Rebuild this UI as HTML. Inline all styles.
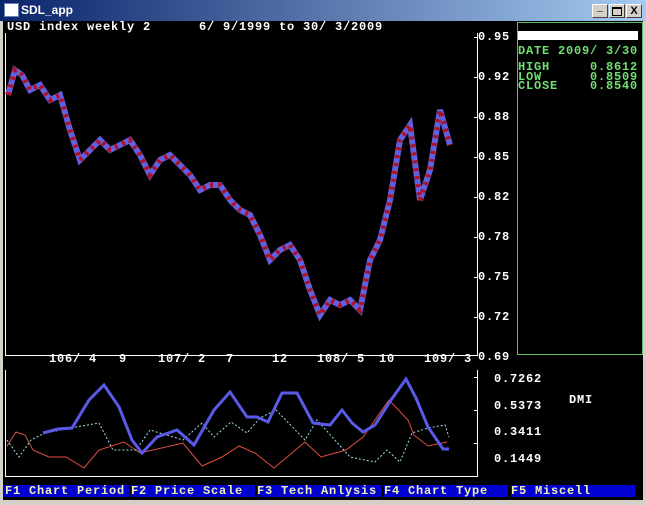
<!DOCTYPE html>
<html><head><style>
body{margin:0;width:646px;height:505px;overflow:hidden;background:#d4d0c8;font-family:"Liberation Mono",monospace;}
.t{position:absolute;white-space:pre;font-size:12px;font-weight:bold;letter-spacing:0.8px;}
.m{position:absolute;top:485px;height:12px;width:124px;background:#0000d0;color:#f0f0b0;white-space:pre;font-size:12px;font-weight:bold;letter-spacing:0.8px;line-height:12px;font-family:"Liberation Mono",monospace;}
</style></head><body>
<div style="position:absolute;left:0;top:0;width:646px;height:21px;background:linear-gradient(90deg,#0a246a,#a6caf0);"></div>
<div style="position:absolute;left:4px;top:3px;width:13px;height:12px;background:#fff;border:1px solid #7080b0"></div>
<div style="position:absolute;left:21px;top:3px;color:#fff;font-family:'Liberation Sans',sans-serif;font-size:12px;font-weight:bold;">SDL_app</div>
<div style="position:absolute;left:592px;top:4px;width:14px;height:12px;background:#d4d0c8;border:1px solid #fff;border-right-color:#404040;border-bottom-color:#404040;font-size:10px;text-align:center;line-height:10px">_</div>
<div style="position:absolute;left:609px;top:4px;width:14px;height:12px;background:#d4d0c8;border:1px solid #fff;border-right-color:#404040;border-bottom-color:#404040;"><div style="margin:2px;width:8px;height:6px;border:1px solid #000;border-top-width:2px"></div></div>
<div style="position:absolute;left:626px;top:4px;width:14px;height:12px;background:#d4d0c8;border:1px solid #fff;border-right-color:#404040;border-bottom-color:#404040;font-size:11px;font-weight:bold;text-align:center;line-height:12px;font-family:'Liberation Sans',sans-serif">X</div>
<div style="position:absolute;left:3px;top:21px;width:640px;height:479px;background:#000;"></div>
<div class="t" style="left:7px;top:20px;color:#fff">USD index weekly 2      6/ 9/1999 to 30/ 3/2009</div>
<div style="position:absolute;left:517px;top:22px;width:124px;height:331px;border:1px solid #60c060;"></div>
<div style="position:absolute;left:518px;top:31px;width:120px;height:9px;background:#fff"></div>
<div class="t" style="left:518px;top:44px;color:#70e070">DATE 2009/ 3/30</div>
<div class="t" style="left:518px;top:63px;color:#70e070;line-height:9.5px">HIGH     0.8612
LOW      0.8509
CLOSE    0.8540</div>
<svg style="position:absolute;left:0;top:0" width="646" height="505">
<g stroke="#fff" stroke-width="1" fill="none">
<line x1="5.5" y1="33" x2="5.5" y2="355"/><line x1="5" y1="355.5" x2="478" y2="355.5"/><line x1="477.5" y1="33" x2="477.5" y2="356"/>
<line x1="5.5" y1="370" x2="5.5" y2="477"/><line x1="5" y1="476.5" x2="478" y2="476.5"/><line x1="477.5" y1="370" x2="477.5" y2="477"/>
<line x1="474" y1="37.5" x2="478" y2="37.5"/><line x1="474" y1="77.5" x2="478" y2="77.5"/><line x1="474" y1="117.5" x2="478" y2="117.5"/><line x1="474" y1="157.5" x2="478" y2="157.5"/><line x1="474" y1="197.5" x2="478" y2="197.5"/><line x1="474" y1="237.5" x2="478" y2="237.5"/><line x1="474" y1="277.5" x2="478" y2="277.5"/><line x1="474" y1="317.5" x2="478" y2="317.5"/>
<line x1="474" y1="377.5" x2="478" y2="377.5"/><line x1="474" y1="410.5" x2="478" y2="410.5"/><line x1="474" y1="443.5" x2="478" y2="443.5"/>
</g>
<polyline fill="none" stroke="#6060e0" stroke-width="6" points="8,95 15,70 22,75 30,90 40,85 50,100 60,95 70,130 80,160 90,150 100,140 110,150 120,145 130,140 140,155 150,175 160,160 170,155 180,165 190,175 200,190 210,185 220,185 230,200 240,210 250,215 260,235 270,260 280,250 290,245 300,260 310,290 320,315 330,300 340,305 350,300 360,310 370,260 380,240 390,200 400,140 410,125 420,200 430,170 440,110 450,145"/>
<polyline fill="none" stroke="#b01020" stroke-width="5" stroke-dasharray="3 5" points="8,95 15,70 22,75 30,90 40,85 50,100 60,95 70,130 80,160 90,150 100,140 110,150 120,145 130,140 140,155 150,175 160,160 170,155 180,165 190,175 200,190 210,185 220,185 230,200 240,210 250,215 260,235 270,260 280,250 290,245 300,260 310,290 320,315 330,300 340,305 350,300 360,310 370,260 380,240 390,200 400,140 410,125 420,200 430,170 440,110 450,145"/>
<polyline fill="none" stroke="#e05040" stroke-width="1" points="7,446 16,432 25,435 33,450 49,457 66,457 84,468 99,450 124,442 140,453 183,443 202,466 222,457 239,446 255,453 274,468 305,442 321,457 346,450 363,437 389,400 408,420 414,435 428,446 447,442"/>
<polyline fill="none" stroke="#a0e0e0" stroke-width="1" stroke-dasharray="2 2" points="7,440 19,457 31,440 45,433 76,427 99,423 113,450 136,450 150,430 183,440 202,423 214,437 231,422 247,433 260,418 276,410 305,440 317,420 350,457 375,462 387,450 400,462 412,433 428,428 445,425 449,437"/>
<polyline fill="none" stroke="#5a5ae8" stroke-width="3" points="43,433 58,429 72,428 89,400 104,385 119,407 132,440 142,453 157,437 177,430 194,445 214,410 230,392 247,417 257,417 268,422 282,393 297,393 313,423 330,425 342,410 352,423 363,432 375,425 391,400 406,379 416,398 428,427 443,449 449,449"/>
</svg>
<div class="t" style="left:478px;top:17px;color:#fff;line-height:40px">0.95
0.92
0.88
0.85
0.82
0.78
0.75
0.72
0.69</div>
<div class="t" style="left:49px;top:352px;color:#fff">106/ 4</div>
<div class="t" style="left:119px;top:352px;color:#fff">9</div>
<div class="t" style="left:158px;top:352px;color:#fff">107/ 2</div>
<div class="t" style="left:226px;top:352px;color:#fff">7</div>
<div class="t" style="left:272px;top:352px;color:#fff">12</div>
<div class="t" style="left:317px;top:352px;color:#fff">108/ 5</div>
<div class="t" style="left:379px;top:352px;color:#fff">10</div>
<div class="t" style="left:424px;top:352px;color:#fff">109/ 3</div>
<div class="t" style="left:494px;top:366px;color:#fff;line-height:26.5px">0.7262
0.5373
0.3411
0.1449</div>
<div class="t" style="left:569px;top:393px;color:#fff">DMI</div>
<div class="m" style="left:3px;padding-left:2px">F1 Chart Period</div>
<div class="m" style="left:131px">F2 Price Scale</div>
<div class="m" style="left:257px">F3 Tech Anlysis</div>
<div class="m" style="left:384px">F4 Chart Type</div>
<div class="m" style="left:511px">F5 Miscell</div>
</body></html>
